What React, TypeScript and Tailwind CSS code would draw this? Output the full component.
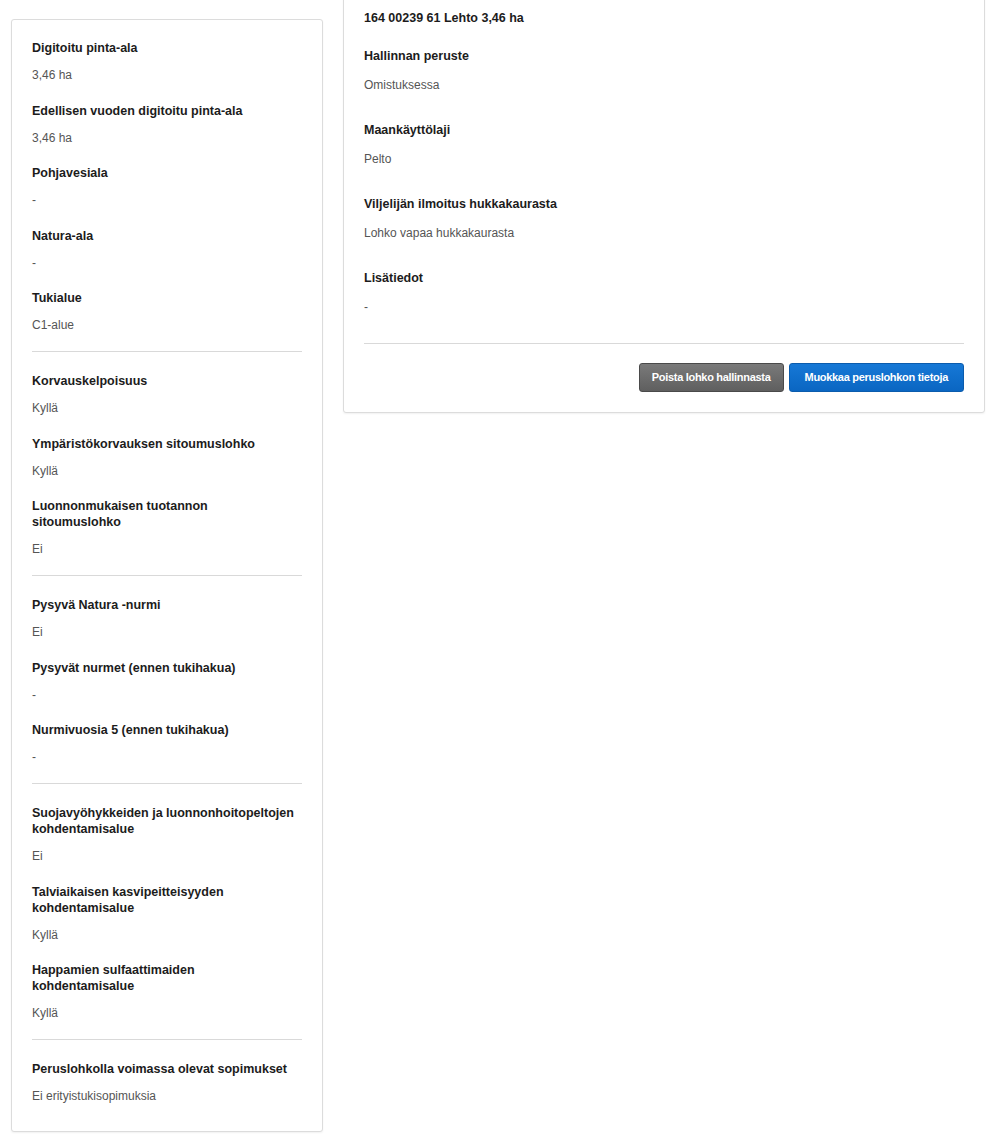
type Item = { label: string; value: string };

const sections: Item[][] = [
  [
    { label: 'Digitoitu pinta-ala', value: '3,46 ha' },
    { label: 'Edellisen vuoden digitoitu pinta-ala', value: '3,46 ha' },
    { label: 'Pohjavesiala', value: '-' },
    { label: 'Natura-ala', value: '-' },
    { label: 'Tukialue', value: 'C1-alue' },
  ],
  [
    { label: 'Korvauskelpoisuus', value: 'Kyllä' },
    { label: 'Ympäristökorvauksen sitoumuslohko', value: 'Kyllä' },
    { label: 'Luonnonmukaisen tuotannon sitoumuslohko', value: 'Ei' },
  ],
  [
    { label: 'Pysyvä Natura -nurmi', value: 'Ei' },
    { label: 'Pysyvät nurmet (ennen tukihakua)', value: '-' },
    { label: 'Nurmivuosia 5 (ennen tukihakua)', value: '-' },
  ],
  [
    { label: 'Suojavyöhykkeiden ja luonnonhoitopeltojen kohdentamisalue', value: 'Ei' },
    { label: 'Talviaikaisen kasvipeitteisyyden kohdentamisalue', value: 'Kyllä' },
    { label: 'Happamien sulfaattimaiden kohdentamisalue', value: 'Kyllä' },
  ],
  [{ label: 'Peruslohkolla voimassa olevat sopimukset', value: 'Ei erityistukisopimuksia' }],
];

const details: Item[] = [
  { label: 'Hallinnan peruste', value: 'Omistuksessa' },
  { label: 'Maankäyttölaji', value: 'Pelto' },
  { label: 'Viljelijän ilmoitus hukkakaurasta', value: 'Lohko vapaa hukkakaurasta' },
  { label: 'Lisätiedot', value: '-' },
];

function Field({ item }: { item: Item }) {
  return (
    <div className="flex flex-col">
      <div className="max-w-[264px] text-[12.5px] leading-[16px] font-semibold text-[#1c1c1c]">{item.label}</div>
      <div className="mt-[11px] text-[12px] leading-[16px] text-[#555]">{item.value}</div>
    </div>
  );
}

export default function App() {
  return (
    <div
      className="flex items-start gap-5 pl-[11px] pr-[19px] pt-[19px] bg-white min-h-[1144px]"
      style={{ fontFamily: '"Liberation Sans", Arial, sans-serif' }}
    >
      <aside className="w-[312px] shrink-0 border border-[#dcdcdc] rounded-[3px] bg-white px-5 pt-5 pb-[27px] shadow-[0_1px_2px_rgba(0,0,0,0.06)]">
        {sections.map((section, i) => (
          <div key={i}>
            {i > 0 && <div className="h-px bg-[#d9d9d9] mt-[18px] mb-[21px]" />}
            <div className="flex flex-col gap-[19.5px]">
              {section.map((item) => (
                <Field key={item.label} item={item} />
              ))}
            </div>
          </div>
        ))}
      </aside>

      <section className="flex-1 -mt-[30px] border border-[#dcdcdc] rounded-[3px] bg-white px-5 pt-5 pb-5 shadow-[0_1px_2px_rgba(0,0,0,0.06)]">
        <div className="text-[12.5px] leading-[16px] font-bold text-[#1c1c1c]">164 00239 61 Lehto 3,46 ha</div>
        <div className="mt-[22px] flex flex-col gap-[29px]">
          {details.map((d) => (
            <div key={d.label} className="flex flex-col">
              <div className="text-[12.5px] leading-[16px] font-semibold text-[#1c1c1c]">{d.label}</div>
              <div className="mt-[13px] text-[12px] leading-[16px] text-[#555]">{d.value}</div>
            </div>
          ))}
        </div>
        <div className="h-px bg-[#d9d9d9] mt-[28px]" />
        <div className="flex justify-end gap-[5px] mt-[19px]">
          <button className="h-[29px] px-[12px] rounded-[3px] border border-[#4a4a4a] bg-gradient-to-b from-[#7a7a7a] to-[#5f5f5f] text-white text-[11px] font-bold tracking-[-0.3px]">
            Poista lohko hallinnasta
          </button>
          <button className="h-[29px] px-[15px] rounded-[3px] border border-[#0b5cad] bg-gradient-to-b from-[#1678d6] to-[#0a66c2] text-white text-[11px] font-bold tracking-[-0.3px]">
            Muokkaa peruslohkon tietoja
          </button>
        </div>
      </section>
    </div>
  );
}
